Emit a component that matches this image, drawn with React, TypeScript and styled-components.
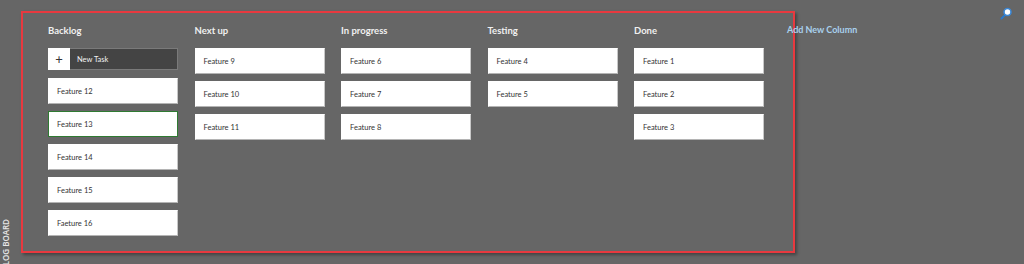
import React from 'react';
import styled, { createGlobalStyle } from 'styled-components';

const GlobalStyle = createGlobalStyle`
  html, body {
    margin: 0;
    padding: 0;
    background: #666666;
    overflow: hidden;
  }
  body {
    font-family: Lato, "Open Sans", "Liberation Sans", sans-serif;
  }
`;

const Page = styled.div`
  display: flex;
  flex-direction: row;
  align-items: flex-start;
  height: 264px;
  width: 1024px;
  overflow: hidden;
  background: #666666;
`;

const Rail = styled.div`
  width: 21px;
  height: 264px;
  flex-shrink: 0;
  display: flex;
  flex-direction: column;
  justify-content: flex-end;
`;

const RailLabel = styled.span`
  writing-mode: vertical-rl;
  transform: rotate(180deg);
  font-family: "Open Sans", sans-serif;
  font-size: 8px;
  font-weight: 600;
  color: #e6e6e6;
  line-height: 10px;
  margin-left: 1px;
  margin-bottom: -22px;
  white-space: nowrap;
`;

const Board = styled.div`
  box-sizing: border-box;
  margin-top: 11px;
  width: 774px;
  height: 242px;
  flex-shrink: 0;
  border: 2px solid #e8393f;
  box-shadow: 2px 2px 3px rgba(0, 0, 0, 0.35);
  padding: 11px 0 0 25px;
  display: flex;
  gap: 16.5px;
`;

const Column = styled.div`
  width: 130px;
  display: flex;
  flex-direction: column;
`;

const Heading = styled.div`
  height: 14px;
  line-height: 14px;
  font-size: 9.5px;
  font-weight: 700;
  color: #f0f0f0;
  margin-bottom: 10px;
`;

const Cards = styled.div`
  display: flex;
  flex-direction: column;
  gap: 7px;
`;

const Card = styled.div<{ $selected?: boolean }>`
  box-sizing: border-box;
  width: 130px;
  height: 26px;
  background: #ffffff;
  border: 1px solid ${(p) => (p.$selected ? '#2f7a32' : '#ffffff')};
  border-right-color: ${(p) => (p.$selected ? '#2f7a32' : '#c8c8c8')};
  border-bottom-color: ${(p) => (p.$selected ? '#2f7a32' : '#b4b4b4')};
  padding-left: 8px;
  display: flex;
  align-items: center;
  font-size: 7.5px;
  color: #333333;
`;

const NewTask = styled.div`
  display: flex;
  height: 22px;
  margin-bottom: 1px;
`;

const PlusBox = styled.div`
  width: 22px;
  background: #ffffff;
  display: flex;
  align-items: center;
  justify-content: center;
  font-size: 13px;
  font-weight: 400;
  color: #333333;
`;

const TaskInput = styled.div`
  flex: 1;
  box-sizing: border-box;
  background: #444444;
  border: 1px solid #7a7a7a;
  border-left: none;
  padding-left: 7px;
  display: flex;
  align-items: center;
  font-size: 7.5px;
  color: #f2f2f2;
`;

const AddColumn = styled.div`
  margin-left: -8px;
  margin-top: 24px;
  font-size: 9px;
  font-weight: 700;
  color: #a9d1ee;
  white-space: nowrap;
`;

const SearchButton = styled.div`
  margin-left: auto;
  margin-right: 12px;
  margin-top: 4px;
  width: 12px;
  height: 14px;
`;

type Column = { title: string; cards: string[] };

const columns: Column[] = [
  { title: 'Backlog', cards: ['Feature 12', 'Feature 13', 'Feature 14', 'Feature 15', 'Faeture 16'] },
  { title: 'Next up', cards: ['Feature 9', 'Feature 10', 'Feature 11'] },
  { title: 'In progress', cards: ['Feature 6', 'Feature 7', 'Feature 8'] },
  { title: 'Testing', cards: ['Feature 4', 'Feature 5'] },
  { title: 'Done', cards: ['Feature 1', 'Feature 2', 'Feature 3'] },
];

function SearchIcon() {
  return (
    <svg width="12" height="14" viewBox="0 0 12 14">
      <line x1="5" y1="9" x2="1.5" y2="12.5" stroke="#2a78c8" strokeWidth="2" strokeLinecap="round" />
      <circle cx="7.5" cy="6" r="3.5" fill="#ffffff" stroke="#3a86d4" strokeWidth="1.6" />
    </svg>
  );
}

function App() {
  return (
    <Page>
      <GlobalStyle />
      <Rail>
        <RailLabel>BACKLOG BOARD</RailLabel>
      </Rail>
      <Board>
        {columns.map((col) => (
          <Column key={col.title}>
            <Heading>{col.title}</Heading>
            <Cards>
              {col.title === 'Backlog' && (
                <NewTask>
                  <PlusBox>+</PlusBox>
                  <TaskInput>New Task</TaskInput>
                </NewTask>
              )}
              {col.cards.map((c) => (
                <Card key={c} $selected={c === 'Feature 13'}>
                  {c}
                </Card>
              ))}
            </Cards>
          </Column>
        ))}
      </Board>
      <AddColumn>Add New Column</AddColumn>
      <SearchButton>
        <SearchIcon />
      </SearchButton>
    </Page>
  );
}

export default App;
